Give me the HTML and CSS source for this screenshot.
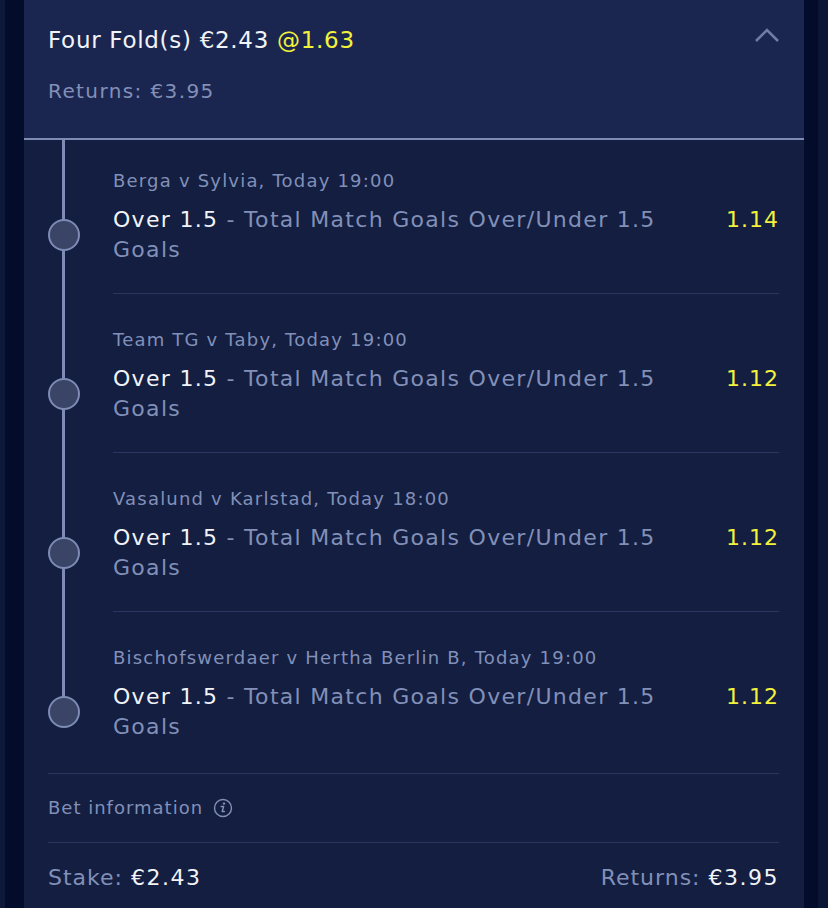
FILE: index.html
```html
<!DOCTYPE html>
<html lang="en">
<head>
    <meta charset="UTF-8">
    <meta name="viewport" content="width=device-width, initial-scale=1.0">
    <title>Bet Slip - Four Fold</title>
    <link rel="stylesheet" href="styles.css">
</head>
<body>
<div class="slip">
    <div class="slip-head">
        <div class="head-row">
            <div class="head-title">Four Fold(s) €2.43 <span class="price">@1.63</span></div>
            <svg class="chevron" width="26" height="16" viewBox="0 0 26 16">
                <polyline points="2,14 13,3 24,14" fill="none" stroke="#6f7ca8" stroke-width="2.6"/>
            </svg>
        </div>
        <div class="head-returns">Returns: €3.95</div>
    </div>

    <div class="legs">
        <div class="leg">
            <div class="rail"><div class="dot"></div></div>
            <div class="leg-main">
                <div class="match">Berga v Sylvia, Today 19:00</div>
                <div class="pick">
                    <p class="pick-text"><span class="pick-name">Over 1.5</span><span> - Total Match Goals Over/Under 1.5</span> <span>Goals</span></p>
                    <div class="odds">1.14</div>
                </div>
            </div>
        </div>
        <div class="leg">
            <div class="rail"><div class="dot"></div></div>
            <div class="leg-main">
                <div class="match">Team TG v Taby, Today 19:00</div>
                <div class="pick">
                    <p class="pick-text"><span class="pick-name">Over 1.5</span><span> - Total Match Goals Over/Under 1.5</span> <span>Goals</span></p>
                    <div class="odds">1.12</div>
                </div>
            </div>
        </div>
        <div class="leg">
            <div class="rail"><div class="dot"></div></div>
            <div class="leg-main">
                <div class="match">Vasalund v Karlstad, Today 18:00</div>
                <div class="pick">
                    <p class="pick-text"><span class="pick-name">Over 1.5</span><span> - Total Match Goals Over/Under 1.5</span> <span>Goals</span></p>
                    <div class="odds">1.12</div>
                </div>
            </div>
        </div>
        <div class="leg">
            <div class="rail"><div class="dot"></div></div>
            <div class="leg-main">
                <div class="match">Bischofswerdaer v Hertha Berlin B, Today 19:00</div>
                <div class="pick">
                    <p class="pick-text"><span class="pick-name">Over 1.5</span><span> - Total Match Goals Over/Under 1.5</span> <span>Goals</span></p>
                    <div class="odds">1.12</div>
                </div>
            </div>
        </div>
    </div>

    <div class="bet-info">
        <span>Bet information</span>
        <svg class="info-icon" width="20" height="20" viewBox="0 0 20 20">
            <circle cx="10" cy="10" r="8.5" fill="none" stroke="#8290b8" stroke-width="1.4"/>
            <circle cx="11" cy="5.6" r="1.2" fill="#8290b8"/>
            <path d="M8.2 8.6 L10.6 8.4 L9.2 13.6 L11.4 13.4" fill="none" stroke="#8290b8" stroke-width="1.5" stroke-linecap="round" stroke-linejoin="round"/>
        </svg>
    </div>

    <div class="totals">
        <div><span>Stake: </span><span class="amount">€2.43</span></div>
        <div><span>Returns: </span><span class="amount">€3.95</span></div>
    </div>
</div>
</body>
</html>
```

FILE: styles.css
```css
body {
    margin: 0;
    padding: 0 14px 0 19px;
    background-color: #030c2b;
    border-left: 5px solid #0e1839;
    border-right: 10px solid #0b1636;
    font-family: "DejaVu Sans", Verdana, sans-serif;
    color: #8290b8;
    height: 908px;
    box-sizing: border-box;
    overflow: hidden;
}
.slip {
    width: 780px;
    background: #131e41;
    min-height: 908px;
}
.slip-head {
    background: #1b2650;
    padding: 26px 24px 35px 24px;
    border-bottom: 2px solid #7d8bb5;
}
.head-row {
    display: flex;
    justify-content: space-between;
    align-items: flex-start;
}
.head-title {
    font-size: 23px;
    line-height: 28px;
    letter-spacing: 0.7px;
    color: #f2f3f7;
}
.price {
    color: #f2f23c;
}
.chevron {
    margin-top: 1px;
}
.head-returns {
    margin-top: 25px;
    font-size: 20px;
    line-height: 24px;
    letter-spacing: 1.4px;
}

.leg {
    display: flex;
    background: linear-gradient(#7d8bb5, #7d8bb5) 38px 0 / 3px 100% no-repeat;
}
.leg:last-child {
    background-size: 3px 100px;
}
.rail {
    width: 89px;
    flex-shrink: 0;
    box-sizing: border-box;
    padding: 84px 0 0 24px;
}
.leg:first-child .rail {
    padding-top: 79px;
}
.dot {
    width: 28px;
    height: 28px;
    border: 2px solid #7d8bb5;
    border-radius: 50%;
    background: #3a4466;
}
.leg-main {
    flex: 1;
    margin-right: 25px;
    padding: 35px 0 28px 0;
    border-bottom: 1px solid #2a3560;
}
.leg:first-child .leg-main {
    padding-top: 30px;
}
.leg:last-child .leg-main {
    border-bottom: none;
    padding-bottom: 31px;
}
.match {
    font-size: 18px;
    line-height: 22px;
    letter-spacing: 1.2px;
}
.pick {
    display: flex;
    justify-content: space-between;
    gap: 40px;
    margin-top: 13px;
    font-size: 22px;
    line-height: 30px;
    letter-spacing: 1.3px;
}
.pick-text {
    margin: 0;
}
.pick-name {
    color: #f2f3f7;
}
.odds {
    color: #f2f23c;
    letter-spacing: 1px;
}

.bet-info {
    margin: 0 25px 0 24px;
    padding: 23px 0;
    border-top: 1px solid #2a3560;
    border-bottom: 1px solid #2a3560;
    font-size: 18px;
    line-height: 22px;
    letter-spacing: 1px;
    display: flex;
    align-items: center;
    gap: 10px;
}
.totals {
    margin: 0 25px 0 24px;
    padding-top: 20px;
    display: flex;
    justify-content: space-between;
    font-size: 22px;
    line-height: 30px;
    letter-spacing: 1px;
}
.amount {
    color: #f2f3f7;
    letter-spacing: 1.5px;
}
```
